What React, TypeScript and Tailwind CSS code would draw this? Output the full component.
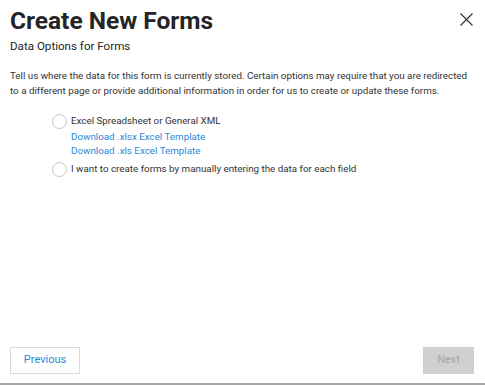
export default function App() {
  return (
    <div
      className="relative flex h-[385px] w-[485px] flex-col bg-white text-[#333333]"
      style={{ fontFamily: 'Roboto, "Open Sans", sans-serif' }}
    >
      <div className="flex items-start justify-between pl-[10px] pr-[12px] pt-[6px]">
        <h1 className="text-[24.5px] font-bold leading-[30px] text-[#252525]">Create New Forms</h1>
        <button className="mt-[6.5px] text-[#333333]" aria-label="Close">
          <svg width="13" height="13" viewBox="0 0 13 13" fill="none" stroke="currentColor" strokeWidth="1.2">
            <path d="M0.5 0.5L12.5 12.5M12.5 0.5L0.5 12.5" />
          </svg>
        </button>
      </div>
      <h2 className="pl-[10px] pt-[2px] text-[11.6px] leading-[16px] text-[#252525]">Data Options for Forms</h2>

      <p className="pl-[10px] pr-[8px] pt-[13.5px] text-[9.8px] leading-[15px]">
        Tell us where the data for this form is currently stored. Certain options may require that you are redirected
        to a different page or provide additional information in order for us to create or update these forms.
      </p>

      <div className="flex flex-col pl-[52px] pt-[15.5px] text-[9.8px] leading-[14px]">
        <label className="flex h-[16px] items-center gap-[4px]">
          <span className="h-[15px] w-[15px] rounded-full border border-[#c4c4c4] bg-white" />
          <span>Excel Spreadsheet or General XML</span>
        </label>
        <div className="flex flex-col pl-[19px] pt-[1px] text-[#2b88d8]">
          <a>Download .xlsx Excel Template</a>
          <a>Download .xls Excel Template</a>
        </div>
        <label className="mt-[3px] flex h-[16px] items-center gap-[4px]">
          <span className="h-[15px] w-[15px] rounded-full border border-[#c4c4c4] bg-white" />
          <span>I want to create forms by manually entering the data for each field</span>
        </label>
      </div>

      <div className="mt-auto flex items-center justify-between pb-[9px] pl-[10px] pr-[11px]">
        <button className="h-[27px] w-[70px] border border-[#dadada] bg-white text-[11px] text-[#2b88d8]">
          Previous
        </button>
        <button className="h-[27px] w-[51px] bg-[#d0d0d0] text-[11px] text-[#a6a6a6]" disabled>
          Next
        </button>
      </div>
      <div className="h-[2px] w-full bg-[#a6a6a6]" />
    </div>
  );
}
